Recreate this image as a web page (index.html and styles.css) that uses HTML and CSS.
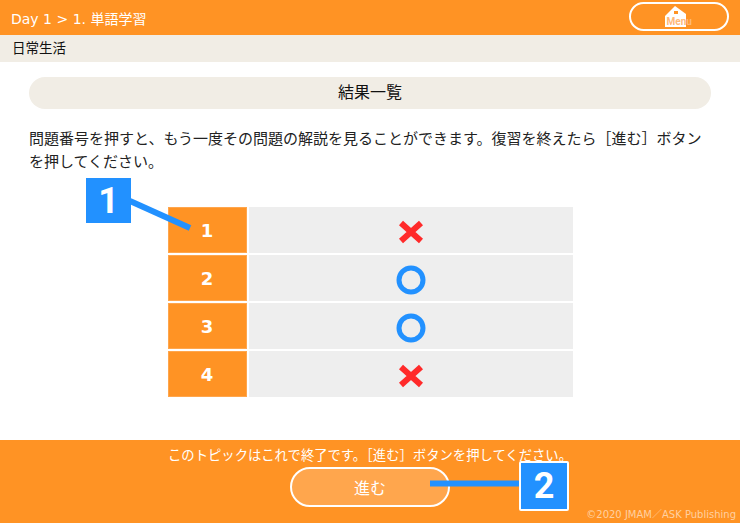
FILE: index.html
```html
<!DOCTYPE html>
<html lang="ja">
<head>
  <meta charset="UTF-8" />
  <meta name="viewport" content="width=device-width, initial-scale=1.0"/>
  <title>結果一覧</title>
  <link rel="stylesheet" href="styles.css">
</head>

<body>
  <header class="top-bar">
    <div class="crumb">Day 1 &gt; 1. 単語学習</div>
    <button class="menu-btn" type="button">
      <span class="menu-icon">
        <svg width="21" height="21" viewBox="0 0 21 21">
          <path d="M0 10 L10 0 L21 8 V21 H0 Z" fill="#fff"/>
          <rect x="9" y="5" width="4" height="3" fill="#ff9324"/>
        </svg>
        <span class="menu-label">Menu</span>
      </span>
    </button>
  </header>
  <div class="sub-bar">日常生活</div>

  <main class="content">
    <h2 class="title-pill">結果一覧</h2>
    <p class="guide">問題番号を押すと、もう一度その問題の解説を見ることができます。復習を終えたら［進む］ボタンを押してください。</p>

    <div class="result-table">
      <div class="num">1</div>
      <div class="mark">
        <svg class="cross" viewBox="0 0 26 24"><path d="M3 3 L23 21 M23 3 L3 21"/></svg>
      </div>
      <div class="num">2</div>
      <div class="mark">
        <svg class="circle" viewBox="0 0 30 30"><circle cx="15" cy="15" r="12"/></svg>
      </div>
      <div class="num">3</div>
      <div class="mark">
        <svg class="circle" viewBox="0 0 30 30"><circle cx="15" cy="15" r="12"/></svg>
      </div>
      <div class="num">4</div>
      <div class="mark">
        <svg class="cross" viewBox="0 0 26 24"><path d="M3 3 L23 21 M23 3 L3 21"/></svg>
      </div>
    </div>
  </main>

  <footer class="bottom-bar">
    <p class="end-msg">このトピックはこれで終了です。［進む］ボタンを押してください。</p>
    <button class="next-btn" type="button">進む</button>
    <p class="copy">©2020 JMAM／ASK Publishing</p>
  </footer>

  <!-- annotation callouts -->
  <svg class="call-line" width="740" height="523" viewBox="0 0 740 523">
    <path d="M130 201 L190 228" />
    <path d="M430 483.500 H522" />
  </svg>
  <div class="callout callout-1">1</div>
  <div class="callout callout-2">2</div>
</body>
</html>
```

FILE: styles.css
```css
* {
  margin: 0;
  padding: 0;
  box-sizing: border-box;
}

body {
  position: relative;
  display: flex;
  flex-direction: column;
  height: 100vh;
  overflow: hidden;
  background: #ffffff;
  color: #111111;
  font-family: "DejaVu Sans", "Noto Sans CJK JP", sans-serif;
  font-size: 15px;
}

.top-bar {
  display: flex;
  align-items: center;
  justify-content: space-between;
  height: 35px;
  padding: 0 11px;
  background: #ff9324;
  color: #ffffff;
}

.crumb {
  font-size: 14px;
}

.menu-btn {
  display: flex;
  justify-content: center;
  width: 100px;
  height: 29px;
  margin-top: -2px;
  background: transparent;
  border: 2px solid #ffffff;
  border-radius: 15px;
  font-family: inherit;
}

.menu-icon {
  position: relative;
  display: block;
  width: 21px;
  height: 21px;
  margin-top: 2px;
  margin-right: 8px;
}

.menu-icon svg {
  display: block;
}

.menu-label {
  position: absolute;
  left: 2px;
  top: 10px;
  color: #ffb877;
  font-family: Roboto, sans-serif;
  font-size: 10px;
  font-weight: 700;
  line-height: 12px;
}

.sub-bar {
  height: 27px;
  padding-left: 12px;
  background: #f1ede5;
  font-size: 13.500px;
  line-height: 27px;
}

.content {
  flex: 1;
  padding: 15px 29px 0;
}

.title-pill {
  height: 32px;
  background: #f1ede5;
  border-radius: 16px;
  font-size: 16px;
  font-weight: 400;
  line-height: 32px;
  text-align: center;
}

.guide {
  margin-top: 19px;
  line-height: 23px;
  color: #222222;
}

.result-table {
  display: grid;
  grid-template-columns: 79px 324px;
  grid-auto-rows: 46px;
  gap: 2px;
  justify-content: center;
  margin-top: 33px;
}

.num {
  display: flex;
  align-items: center;
  justify-content: center;
  background: #ff9324;
  border: 1px solid #ffa64d;
  color: #ffffff;
  font-size: 18px;
  font-weight: 700;
}

.mark {
  display: flex;
  align-items: center;
  justify-content: center;
  padding-top: 3px;
  background: #eeeeee;
}

.cross {
  width: 26px;
  height: 24px;
}

.cross path {
  fill: none;
  stroke: #ff2a2a;
  stroke-width: 6;
}

.circle {
  width: 30px;
  height: 30px;
}

.circle circle {
  fill: none;
  stroke: #2291ff;
  stroke-width: 5;
}

.bottom-bar {
  display: flex;
  flex-direction: column;
  align-items: center;
  height: 83px;
  padding-top: 6px;
  background: #ff9324;
  color: #ffffff;
}

.end-msg {
  font-size: 13.330px;
  line-height: 20px;
}

.next-btn {
  width: 160px;
  height: 40px;
  margin-top: 1px;
  background: #ffa64d;
  border: 2px solid #ffffff;
  border-radius: 20px;
  color: #ffffff;
  font-family: inherit;
  font-size: 16px;
}

.copy {
  align-self: flex-end;
  margin-top: 2px;
  padding-right: 4px;
  color: #ffd0a0;
  font-size: 10px;
  line-height: 12px;
}

.call-line {
  position: absolute;
  top: 0;
  left: 0;
  pointer-events: none;
}

.call-line path {
  fill: none;
  stroke: #2291ff;
  stroke-width: 6;
}

.callout {
  position: absolute;
  display: flex;
  align-items: center;
  justify-content: center;
  background: #2291ff;
  color: #ffffff;
  font-family: Roboto, sans-serif;
  font-size: 36px;
  font-weight: 700;
}

.callout-1 {
  left: 86px;
  top: 178px;
  width: 45px;
  height: 45px;
}

.callout-2 {
  left: 519px;
  top: 461px;
  width: 50px;
  height: 50px;
  border: 2px solid #ffffff;
  border-radius: 2px;
}
```
